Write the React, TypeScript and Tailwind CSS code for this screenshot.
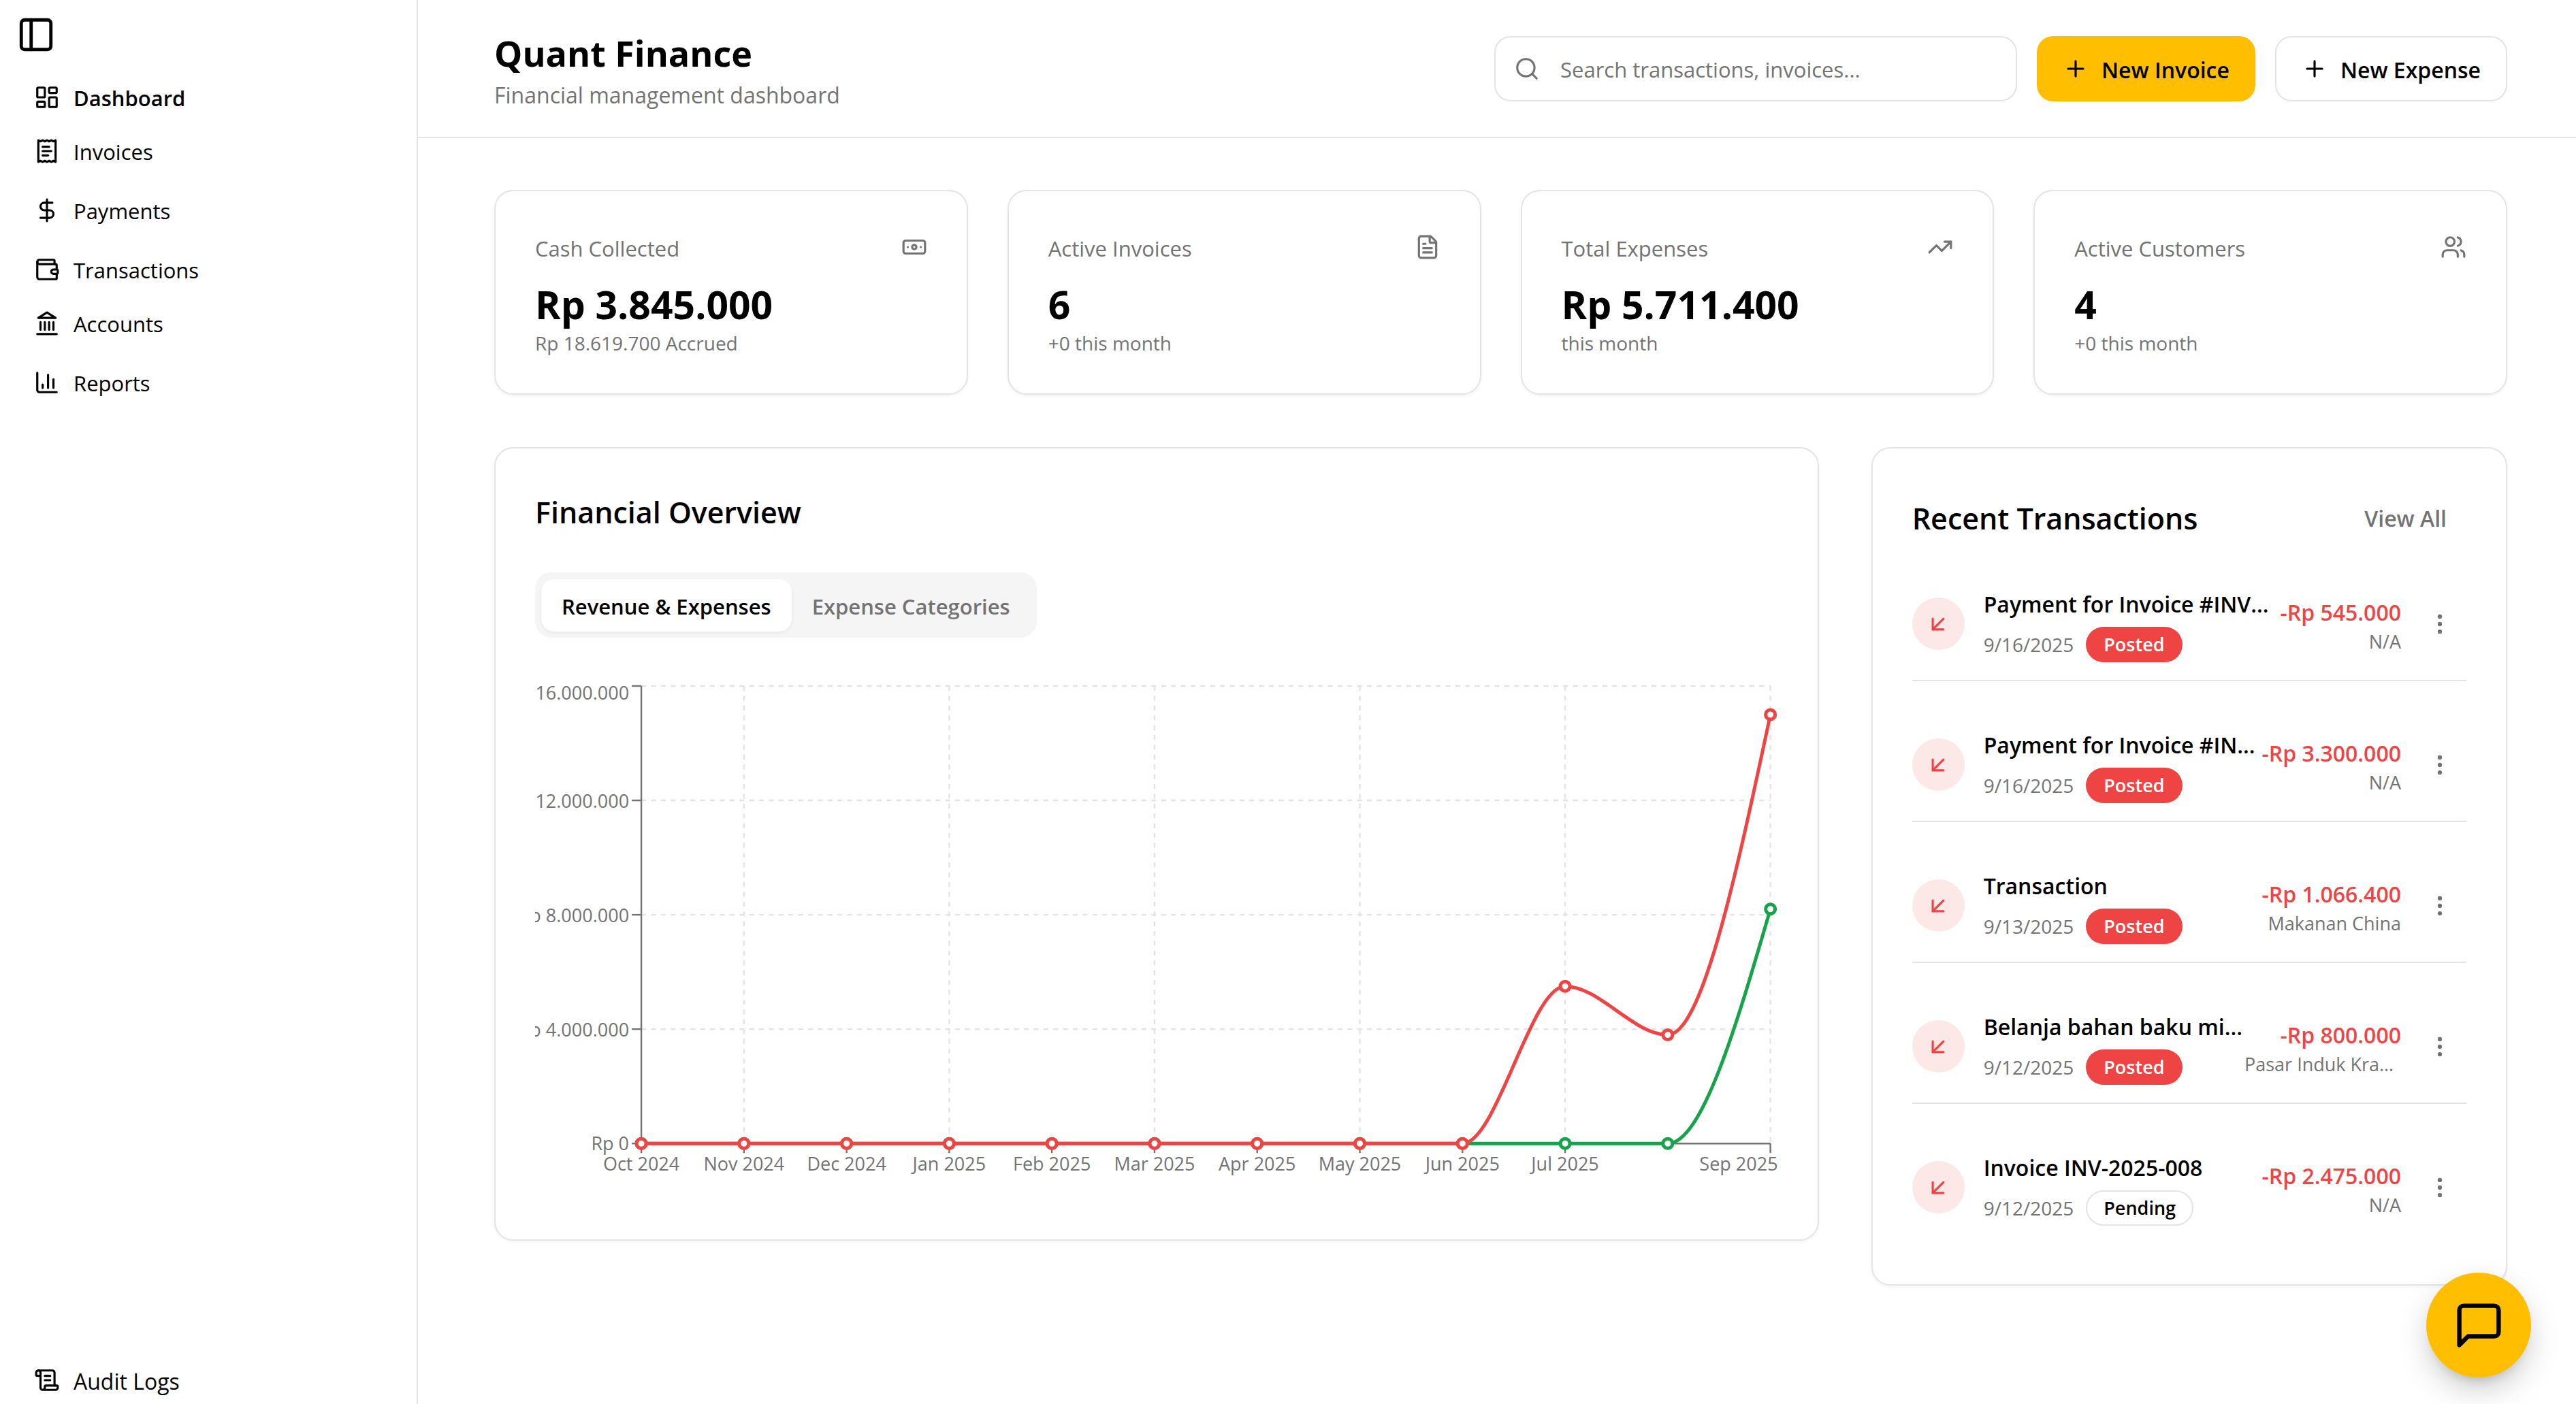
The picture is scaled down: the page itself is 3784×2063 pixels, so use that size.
import type { ReactNode } from 'react'
import {
  ArrowDownLeft,
  Banknote,
  DollarSign,
  EllipsisVertical,
  FileText,
  LayoutDashboard,
  PanelLeft,
  Plus,
  ScrollText,
  Search,
  TrendingUp,
  Users,
  type LucideIcon,
} from 'lucide-react'

type IconProps = { className?: string }

function Stroke({ className, children }: IconProps & { children: ReactNode }) {
  return (
    <svg
      viewBox="0 0 24 24"
      fill="none"
      stroke="currentColor"
      strokeWidth="2"
      strokeLinecap="round"
      strokeLinejoin="round"
      aria-hidden="true"
      className={className}
    >
      {children}
    </svg>
  )
}

function ReceiptIcon({ className }: IconProps) {
  return (
    <Stroke className={className}>
      <path d="M4 2v20l2-1 2 1 2-1 2 1 2-1 2 1 2-1 2 1V2l-2 1-2-1-2 1-2-1-2 1-2-1-2 1Z" />
      <path d="M14 8H8" />
      <path d="M16 12H8" />
      <path d="M13 16H8" />
    </Stroke>
  )
}

function TransactionsIcon({ className }: IconProps) {
  return (
    <Stroke className={className}>
      <path d="M19 7V4a1 1 0 0 0-1-1H5a2 2 0 0 0 0 4h15a1 1 0 0 1 1 1v4h-3a2 2 0 0 0 0 4h3a1 1 0 0 0 1-1v-2a1 1 0 0 0-1-1" />
      <path d="M3 5v14a2 2 0 0 0 2 2h15a1 1 0 0 0 1-1v-4" />
    </Stroke>
  )
}

function BankIcon({ className }: IconProps) {
  return (
    <Stroke className={className}>
      <path d="M3 22h18" />
      <path d="M6 18v-7" />
      <path d="M10 18v-7" />
      <path d="M14 18v-7" />
      <path d="M18 18v-7" />
      <path d="m12 2 8 5H4Z" />
    </Stroke>
  )
}

function ReportsIcon({ className }: IconProps) {
  return (
    <Stroke className={className}>
      <path d="M3 3v16a2 2 0 0 0 2 2h16" />
      <path d="M18 17V9" />
      <path d="M13 17V5" />
      <path d="M8 17v-3" />
    </Stroke>
  )
}

type NavIcon = LucideIcon | ((p: IconProps) => ReactNode)
type NavItem = { label: string; icon: NavIcon; active?: boolean }

const navGroups: NavItem[][] = [
  [
    { label: 'Dashboard', icon: LayoutDashboard, active: true },
    { label: 'Invoices', icon: ReceiptIcon },
  ],
  [{ label: 'Payments', icon: DollarSign }],
  [
    { label: 'Transactions', icon: TransactionsIcon },
    { label: 'Accounts', icon: BankIcon },
  ],
  [{ label: 'Reports', icon: ReportsIcon }],
]

function NavLink({ item }: { item: NavItem }) {
  const Icon = item.icon
  return (
    <a
      href="#"
      aria-current={item.active ? 'page' : undefined}
      className={
        item.active
          ? 'flex h-[77px] items-center gap-5 text-[31px] font-semibold'
          : 'flex h-[77px] items-center gap-5 text-[31px]'
      }
    >
      <Icon className="size-[38px] shrink-0" />
      <span className="pt-1">{item.label}</span>
    </a>
  )
}

function Sidebar() {
  return (
    <aside className="flex w-[614px] shrink-0 flex-col border-r-2 border-[#e4e4e4] pt-[22px]">
      <button type="button" aria-label="Toggle sidebar" className="ml-6 size-[58px]">
        <PanelLeft className="size-[58px]" />
      </button>
      <nav aria-label="Main" className="mt-6 flex flex-1 flex-col gap-[10px] px-[50px]">
        {navGroups.map((group, i) => (
          <div key={i} className="flex flex-col gap-[2px]">
            {group.map((item) => (
              <NavLink key={item.label} item={item} />
            ))}
          </div>
        ))}
        <a href="#" className="mt-auto flex h-[71px] items-center gap-5 text-[32px]">
          <ScrollText className="size-[38px] shrink-0" />
          <span className="pt-1">Audit Logs</span>
        </a>
      </nav>
    </aside>
  )
}

function Header() {
  return (
    <header className="flex h-[203px] items-center justify-between border-b-2 border-[#e4e4e4] pr-[101px] pl-[112px]">
      <div className="flex flex-col gap-[2px] pt-1">
        <h1 className="text-[52px] leading-[72px] font-bold">Quant Finance</h1>
        <p className="text-[32px] leading-[48px] text-[#737373]">Financial management dashboard</p>
      </div>
      <div className="flex items-center gap-[29px]">
        <label className="flex h-24 w-[768px] items-center gap-[30px] rounded-3xl border-2 border-[#e4e4e4] px-[27px] text-[#737373]">
          <Search className="size-[38px] shrink-0" />
          <input
            type="search"
            aria-label="Search transactions and invoices"
            placeholder="Search transactions, invoices..."
            className="w-full pt-1 text-[31px] outline-none placeholder:text-[#737373]"
          />
        </label>
        <button
          type="button"
          className="flex h-24 items-center gap-[19px] rounded-3xl bg-[#ffbf00] px-[38px] text-[32px] font-semibold"
        >
          <Plus className="size-[38px]" />
          <span className="pt-1">New Invoice</span>
        </button>
        <button
          type="button"
          className="flex h-24 items-center gap-[19px] rounded-3xl border-2 border-[#e4e4e4] px-[37px] text-[32px] font-semibold"
        >
          <Plus className="size-[38px]" />
          <span className="pt-1">New Expense</span>
        </button>
      </div>
    </header>
  )
}

const stats: { label: string; value: string; note: string; icon: LucideIcon }[] = [
  { label: 'Cash Collected', value: 'Rp 3.845.000', note: 'Rp 18.619.700 Accrued', icon: Banknote },
  { label: 'Active Invoices', value: '6', note: '+0 this month', icon: FileText },
  { label: 'Total Expenses', value: 'Rp 5.711.400', note: 'this month', icon: TrendingUp },
  { label: 'Active Customers', value: '4', note: '+0 this month', icon: Users },
]

function StatCards() {
  return (
    <section aria-label="Key figures" className="grid grid-cols-4 gap-[58px]">
      {stats.map(({ label, value, note, icon: Icon }) => (
        <article
          key={label}
          className="rounded-[28px] border-2 border-[#e4e4e4] px-[58px] pt-[58px] pb-[55px] shadow-[0_2px_5px_rgba(0,0,0,0.05)]"
        >
          <div className="flex h-12 items-center justify-between text-[#737373]">
            <h2 className="pt-1 text-[31px] font-medium">{label}</h2>
            <Icon className="size-[38px]" />
          </div>
          <p className="mt-[22px] text-[57px] leading-[76px] font-bold">{value}</p>
          <p className="text-[28px] leading-[38px] text-[#737373]">{note}</p>
        </article>
      ))}
    </section>
  )
}

const months = [
  'Oct 2024',
  'Nov 2024',
  'Dec 2024',
  'Jan 2025',
  'Feb 2025',
  'Mar 2025',
  'Apr 2025',
  'May 2025',
  'Jun 2025',
  'Jul 2025',
  'Aug 2025',
  'Sep 2025',
]
const expenses = [0, 0, 0, 0, 0, 0, 0, 0, 0, 5.5, 3.8, 15]
const revenue = [0, 0, 0, 0, 0, 0, 0, 0, 0, 0, 0, 8.2]
const yTicks = [
  { value: 16, label: 'Rp 16.000.000', shift: 20 },
  { value: 12, label: 'Rp 12.000.000', shift: 11 },
  { value: 8, label: 'Rp 8.000.000', shift: 11 },
  { value: 4, label: 'Rp 4.000.000', shift: 11 },
  { value: 0, label: 'Rp 0', shift: 10 },
]

const plot = { left: 156, right: 1814, top: 13, bottom: 685 }
const xAt = (i: number) => plot.left + (i * (plot.right - plot.left)) / (months.length - 1)
const yAt = (v: number) => plot.bottom - (v / 16) * (plot.bottom - plot.top)

// Cubic path through the points that never overshoots them.
function monotonePath(values: number[]) {
  const pts = values.map((v, i) => ({ x: xAt(i), y: yAt(v) }))
  const step = pts[1].x - pts[0].x
  const slopes = pts.slice(1).map((p, i) => (p.y - pts[i].y) / step)
  const tangents = pts.map((_, i) => {
    if (i === 0 || i === pts.length - 1) return 0
    const a = slopes[i - 1]
    const b = slopes[i]
    return a * b <= 0 ? 0 : Math.sign(a) * Math.min(Math.abs(a), Math.abs(b), Math.abs(a + b) / 4)
  })
  const last = pts.length - 1
  tangents[last] = (3 * slopes[last - 1] - tangents[last - 1]) / 2
  return pts.slice(1).reduce((d, p, i) => {
    const prev = pts[i]
    const third = step / 3
    return `${d}C${prev.x + third},${prev.y + third * tangents[i]},${p.x - third},${p.y - third * tangents[i + 1]},${p.x},${p.y}`
  }, `M${pts[0].x},${pts[0].y}`)
}

function Series({ values, color }: { values: number[]; color: string }) {
  return (
    <g stroke={color} strokeWidth="5">
      <path d={monotonePath(values)} fill="none" />
      {values.map((v, i) => (
        <circle key={i} cx={xAt(i)} cy={yAt(v)} r="7" fill="#fff" />
      ))}
    </g>
  )
}

function Chart() {
  return (
    <svg
      viewBox="0 0 1825 768"
      role="img"
      aria-label="Revenue and expenses by month"
      className="mt-[58px] block w-full overflow-hidden"
    >
      <g stroke="#e4e4e4" strokeWidth="2.4" strokeDasharray="7.2 7.2">
        {yTicks.slice(0, 4).map((t) => (
          <line key={t.value} x1={plot.left} x2={plot.right} y1={yAt(t.value)} y2={yAt(t.value)} />
        ))}
        {[1, 3, 5, 7, 9, 11].map((i) => (
          <line key={i} x1={xAt(i)} x2={xAt(i)} y1={plot.top} y2={plot.bottom} />
        ))}
      </g>
      <g stroke="#737373" strokeWidth="2.4">
        <line x1={plot.left} x2={plot.left} y1={plot.top} y2={plot.bottom} />
        <line x1={plot.left} x2={plot.right} y1={plot.bottom} y2={plot.bottom} />
        {yTicks.map((t) => (
          <line key={t.value} x1={plot.left - 14} x2={plot.left} y1={yAt(t.value)} y2={yAt(t.value)} />
        ))}
        {months.map((m, i) =>
          i === 10 ? null : <line key={m} x1={xAt(i)} x2={xAt(i)} y1={plot.bottom} y2={plot.bottom + 14} />,
        )}
      </g>
      <g fill="#737373" fontSize="27">
        {yTicks.map((t) => (
          <text key={t.value} x="138" y={yAt(t.value) + t.shift} textAnchor="end">
            {t.label}
          </text>
        ))}
        {months.map((m, i) =>
          i === 10 ? null : (
            <text key={m} x={i === 11 ? 1825 : xAt(i)} y="725" textAnchor={i === 11 ? 'end' : 'middle'}>
              {m}
            </text>
          ),
        )}
      </g>
      <Series values={revenue} color="#16a34a" />
      <Series values={expenses} color="#ef4444" />
    </svg>
  )
}

function Overview() {
  return (
    <section className="col-span-2 rounded-[28px] border-2 border-[#e4e4e4] p-[58px] shadow-[0_2px_5px_rgba(0,0,0,0.05)]">
      <h2 className="pt-1 text-[43px] leading-[64px] font-semibold">Financial Overview</h2>
      <div
        role="tablist"
        className="mt-[56px] inline-flex h-24 items-center rounded-3xl bg-[#f5f5f5] px-[9px] align-top text-[31px] font-semibold"
      >
        <button
          type="button"
          role="tab"
          aria-selected="true"
          className="h-[77px] rounded-[19px] bg-white px-[30px] pt-1 shadow-[0_2px_5px_rgba(0,0,0,0.06)]"
        >
          Revenue &amp; Expenses
        </button>
        <button type="button" role="tab" aria-selected="false" className="h-[77px] px-[30px] pt-1 text-[#737373]">
          Expense Categories
        </button>
      </div>
      <Chart />
    </section>
  )
}

const transactions = [
  { title: 'Payment for Invoice #INV...', date: '9/16/2025', status: 'Posted', amount: '-Rp 545.000', party: 'N/A' },
  { title: 'Payment for Invoice #IN...', date: '9/16/2025', status: 'Posted', amount: '-Rp 3.300.000', party: 'N/A' },
  { title: 'Transaction', date: '9/13/2025', status: 'Posted', amount: '-Rp 1.066.400', party: 'Makanan China' },
  { title: 'Belanja bahan baku mi...', date: '9/12/2025', status: 'Posted', amount: '-Rp 800.000', party: 'Pasar Induk Kramat Jati' },
  { title: 'Invoice INV-2025-008', date: '9/12/2025', status: 'Pending', amount: '-Rp 2.475.000', party: 'N/A' },
]

function Transactions() {
  return (
    <section className="self-start rounded-[28px] border-2 border-[#e4e4e4] px-[58px] pt-[58px] pb-[60px] shadow-[0_2px_5px_rgba(0,0,0,0.05)]">
      <div className="flex h-[86px] items-center justify-between pt-1">
        <h2 className="text-[43px] font-semibold">Recent Transactions</h2>
        <button type="button" className="px-[29px] text-[32px] font-semibold text-[#737373]">
          View All
        </button>
      </div>
      <ul className="mt-[29px] flex flex-col gap-[38px]">
        {transactions.map((t) => (
          <li
            key={t.title}
            className="flex items-center border-b-2 border-[#e4e4e4] pt-[28px] pb-[26px] last:border-b-0"
          >
            <span className="flex size-[77px] shrink-0 items-center justify-center rounded-full bg-[#fde8e8] text-[#ef4444]">
              <ArrowDownLeft className="size-[38px]" />
            </span>
            <div className="ml-[28px] flex-1 pt-1 whitespace-nowrap">
              <p className="text-[32px] leading-[48px] font-semibold">{t.title}</p>
              <div className="mt-[9px] flex items-center gap-[18px]">
                <span className="text-[28px] text-[#737373]">{t.date}</span>
                {t.status === 'Posted' ? (
                  <span className="flex h-[52px] items-center rounded-full bg-[#ef4444] px-[26px] text-[27px] font-semibold text-white">
                    {t.status}
                  </span>
                ) : (
                  <span className="flex h-[52px] items-center rounded-full border-2 border-[#e4e4e4] px-6 text-[27px] font-semibold">
                    {t.status}
                  </span>
                )}
              </div>
            </div>
            <div className="flex flex-col items-end pt-1 whitespace-nowrap">
              <p className="text-[32px] leading-[48px] font-semibold text-[#ef4444]">{t.amount}</p>
              <p className="max-w-[230px] truncate text-[27px] leading-[38px] text-[#737373]">{t.party}</p>
            </div>
            <button
              type="button"
              aria-label={`Actions for ${t.title}`}
              className="ml-[19px] flex size-[77px] items-center justify-center text-[#737373]"
            >
              <EllipsisVertical className="size-[38px]" />
            </button>
          </li>
        ))}
      </ul>
    </section>
  )
}

function ChatButton() {
  return (
    <button
      type="button"
      aria-label="Open chat"
      className="fixed right-[66px] bottom-[39px] flex size-[154px] items-center justify-center rounded-full bg-[#ffbf00] shadow-[0_19px_48px_-7px_rgba(0,0,0,0.25),0_14px_19px_-14px_rgba(0,0,0,0.2)]"
    >
      <Stroke className="size-[77px]">
        <path d="M21 15a2 2 0 0 1-2 2H7l-4 4V5a2 2 0 0 1 2-2h14a2 2 0 0 1 2 2z" />
      </Stroke>
    </button>
  )
}

export default function App() {
  return (
    <div className="flex min-h-screen bg-white font-['Open_Sans','Noto_Sans',sans-serif] text-black">
      <Sidebar />
      <div className="min-w-0 flex-1">
        <Header />
        <main className="flex flex-col gap-[77px] pt-[76px] pr-[101px] pb-[76px] pl-[112px]">
          <StatCards />
          <div className="grid grid-cols-3 items-start gap-[77px]">
            <Overview />
            <Transactions />
          </div>
        </main>
      </div>
      <ChatButton />
    </div>
  )
}
